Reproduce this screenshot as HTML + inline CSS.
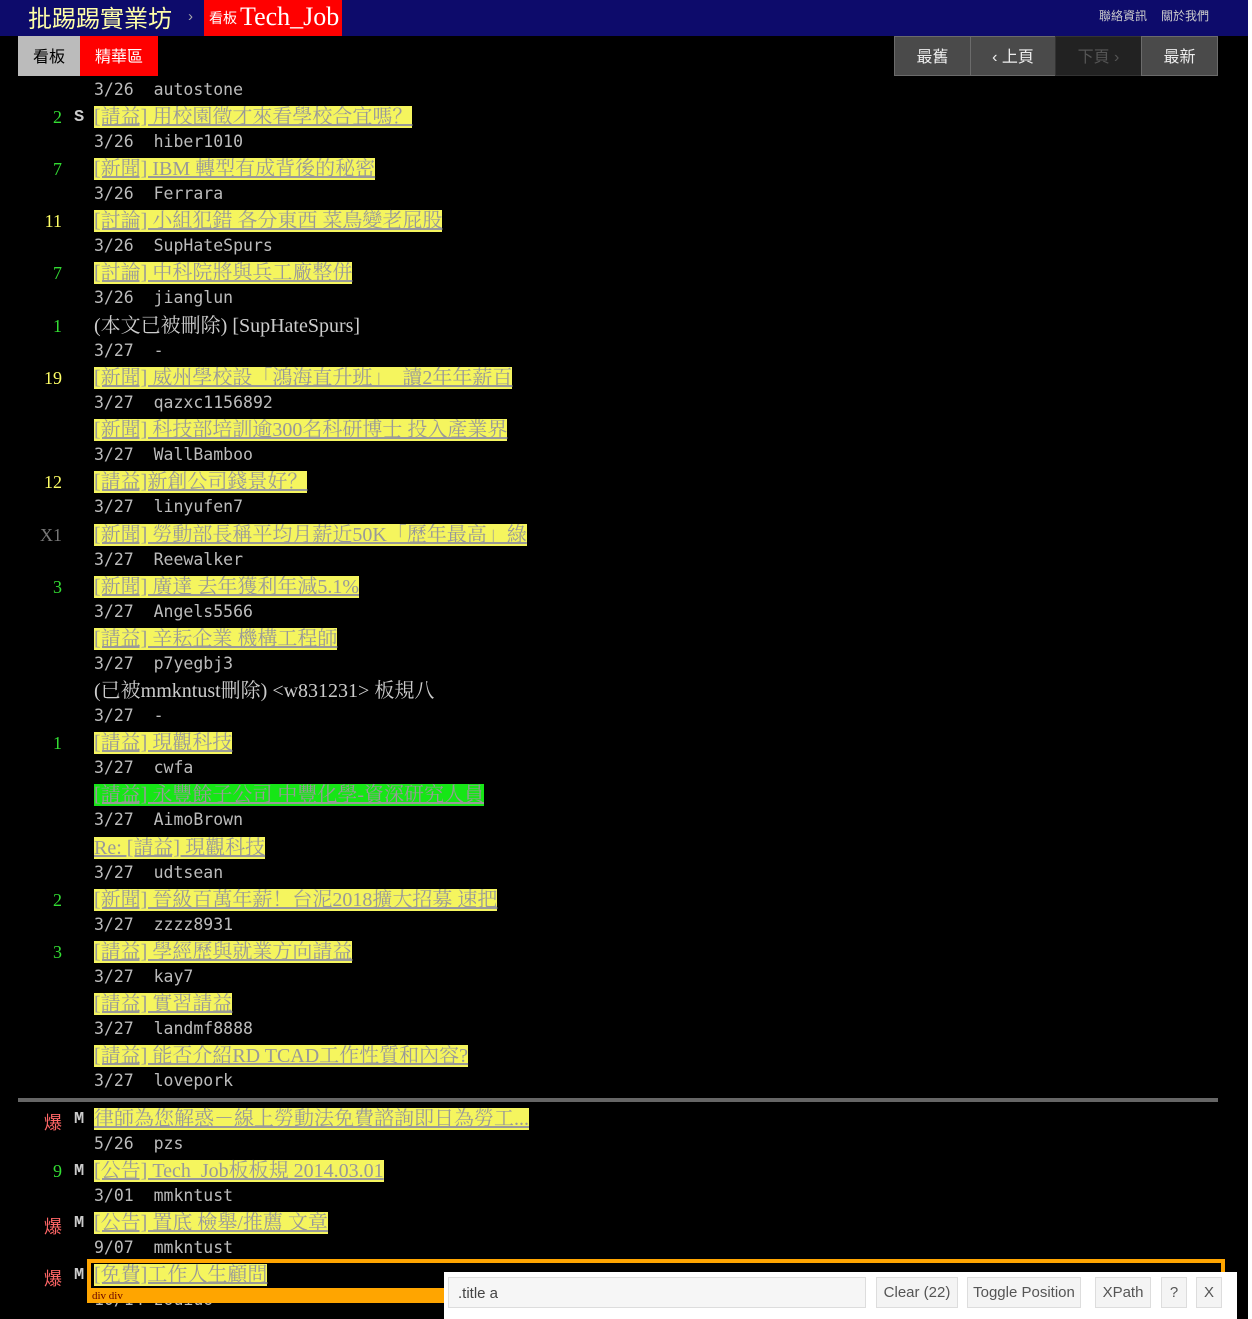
<!DOCTYPE html>
<html><head><meta charset="utf-8"><style>
body{margin:0;background:#000;width:1252px;height:1319px;overflow:hidden;position:relative;font-family:"Liberation Serif","Noto Serif CJK SC",serif;}
#top{position:absolute;left:0;top:0;width:1248px;height:36px;background:#0d0b6b;}
.logo{position:absolute;left:28px;top:-1px;font-size:24px;color:#ffffa8;font-family:"Liberation Sans","Noto Sans CJK TC",sans-serif;}
.gt{position:absolute;left:188px;top:8px;color:#aaa;font-size:15px;font-family:"Liberation Sans",sans-serif}
.board{position:absolute;left:204px;top:0;width:138px;height:36px;background:#f00;color:#fff;}
.board .s{position:absolute;left:5px;top:8px;font-size:14px;font-family:"Liberation Sans","Noto Sans CJK TC",sans-serif}
.board .b{position:absolute;left:36px;top:2px;font-size:26px}
.tr{position:absolute;top:7px;font-size:12px;color:#ccc;font-family:"Liberation Sans","Noto Sans CJK TC",sans-serif}
.btn{position:absolute;top:36px;height:40px;line-height:44px;text-align:center;font-size:16px;font-family:"Liberation Sans","Noto Sans CJK TC",sans-serif;box-sizing:border-box}
.rb{background:#4a4a4a;color:#eee;border:1px solid #6b6b6b;line-height:42px}
.row{position:absolute;left:0;width:1220px;height:52px}
.n{position:absolute;left:20px;width:42px;text-align:right;top:1px;font-size:18px;font-family:"Liberation Serif",serif}
.m{position:absolute;left:74px;top:2px;color:#ccc;font-family:"Liberation Mono",monospace;font-size:17px;font-weight:bold}
.t{position:absolute;left:94px;top:0;font-size:20px;line-height:22px;white-space:nowrap}
.t a{background:#f5f55e;color:#999;text-decoration:underline}
.t a.g{background:#16e616}
.t.d{color:#ccc}
.meta{position:absolute;left:94px;top:26px;color:#bbb;font-family:"DejaVu Sans Mono",monospace;font-size:16.5px;white-space:pre}
.gr{color:#33dd33}.ye{color:#ffff66}.gy{color:#777}.rd{color:#ff6666;font-family:"Noto Sans CJK TC",sans-serif;font-size:18px}
</style></head><body>
<div id="top">
<div class="logo">批踢踢實業坊</div><div class="gt">›</div>
<div class="board"><span class="s">看板</span><span class="b">Tech_Job</span></div>
<div class="tr" style="left:1099px">聯絡資訊</div><div class="tr" style="left:1161px">關於我們</div>
</div>
<div style="position:absolute;left:1248px;top:0;width:4px;height:1319px;background:#fff"></div>

<div class="row" style="top:54px"><div class="meta">3/26  autostone</div></div>
<div class="row" style="top:106px"><div class="n gr">2</div><div class="m">S</div><div class="t"><a>[請益] 用校園徵才來看學校合宜嗎？</a></div><div class="meta">3/26  hiber1010</div></div>
<div class="row" style="top:158px"><div class="n gr">7</div><div class="t"><a>[新聞] IBM 轉型有成背後的秘密</a></div><div class="meta">3/26  Ferrara</div></div>
<div class="row" style="top:210px"><div class="n ye">11</div><div class="t"><a>[討論] 小組犯錯 各分東西 菜鳥變老屁股</a></div><div class="meta">3/26  SupHateSpurs</div></div>
<div class="row" style="top:262px"><div class="n gr">7</div><div class="t"><a>[討論] 中科院將與兵工廠整併</a></div><div class="meta">3/26  jianglun</div></div>
<div class="row" style="top:315px"><div class="n gr">1</div><div class="t d">(本文已被刪除) [SupHateSpurs]</div><div class="meta">3/27  -</div></div>
<div class="row" style="top:367px"><div class="n ye">19</div><div class="t"><a>[新聞] 威州學校設「鴻海直升班」　讀2年年薪百</a></div><div class="meta">3/27  qazxc1156892</div></div>
<div class="row" style="top:419px"><div class="t"><a>[新聞] 科技部培訓逾300名科研博士 投入產業界</a></div><div class="meta">3/27  WallBamboo</div></div>
<div class="row" style="top:471px"><div class="n ye">12</div><div class="t"><a>[請益]新創公司錢景好？</a></div><div class="meta">3/27  linyufen7</div></div>
<div class="row" style="top:524px"><div class="n gy">X1</div><div class="t"><a>[新聞] 勞動部長稱平均月薪近50K「歷年最高」綠</a></div><div class="meta">3/27  Reewalker</div></div>
<div class="row" style="top:576px"><div class="n gr">3</div><div class="t"><a>[新聞] 廣達 去年獲利年減5.1%</a></div><div class="meta">3/27  Angels5566</div></div>
<div class="row" style="top:628px"><div class="t"><a>[請益] 辛耘企業 機構工程師</a></div><div class="meta">3/27  p7yegbj3</div></div>
<div class="row" style="top:680px"><div class="t d">(已被mmkntust刪除) &lt;w831231&gt; 板規八</div><div class="meta">3/27  -</div></div>
<div class="row" style="top:732px"><div class="n gr">1</div><div class="t"><a>[請益] 現觀科技</a></div><div class="meta">3/27  cwfa</div></div>
<div class="row" style="top:784px"><div class="t"><a class="g">[請益] 永豐餘子公司 中豐化學-資深研究人員</a></div><div class="meta">3/27  AimoBrown</div></div>
<div class="row" style="top:837px"><div class="t"><a>Re: [請益] 現觀科技</a></div><div class="meta">3/27  udtsean</div></div>
<div class="row" style="top:889px"><div class="n gr">2</div><div class="t"><a>[新聞] 晉級百萬年薪！台泥2018擴大招募 速把</a></div><div class="meta">3/27  zzzz8931</div></div>
<div class="row" style="top:941px"><div class="n gr">3</div><div class="t"><a>[請益] 學經歷與就業方向請益</a></div><div class="meta">3/27  kay7</div></div>
<div class="row" style="top:993px"><div class="t"><a>[請益] 實習請益</a></div><div class="meta">3/27  landmf8888</div></div>
<div class="row" style="top:1045px"><div class="t"><a>[請益] 能否介紹RD TCAD工作性質和內容?</a></div><div class="meta">3/27  lovepork</div></div>
<div style="position:absolute;left:18px;top:1098px;width:1200px;height:4px;background:#666"></div>
<div class="row" style="top:1108px"><div class="n rd">爆</div><div class="m">M</div><div class="t"><a>律師為您解惑－線上勞動法免費諮詢即日為勞工...</a></div><div class="meta">5/26  pzs</div></div>
<div class="row" style="top:1160px"><div class="n gr">9</div><div class="m">M</div><div class="t"><a>[公告] Tech_Job板板規 2014.03.01</a></div><div class="meta">3/01  mmkntust</div></div>
<div class="row" style="top:1212px"><div class="n rd">爆</div><div class="m">M</div><div class="t"><a>[公告] 置底 檢舉/推薦 文章</a></div><div class="meta">9/07  mmkntust</div></div>
<div class="row" style="top:1264px"><div class="n rd">爆</div><div class="m">M</div><div class="t"><a>[免費]工作人生顧問</a></div><div class="meta">10/14 zouiuo</div></div>

<div class="btn" style="left:18px;width:62px;background:#bbb;color:#000">看板</div>
<div class="btn" style="left:80px;width:78px;background:#f00;color:#fff">精華區</div>
<div class="btn rb" style="left:894px;width:77px">最舊</div>
<div class="btn rb" style="left:970px;width:86px">‹ 上頁</div>
<div class="btn rb" style="left:1055px;width:87px;background:#222;color:#555;border-color:#333">下頁 ›</div>
<div class="btn rb" style="left:1141px;width:77px">最新</div>

<div style="position:absolute;left:87px;top:1259px;width:1138px;height:44px;box-sizing:border-box;border:4px solid #ffa500;border-bottom:none"></div>
<div style="position:absolute;left:87px;top:1288px;width:357px;height:15px;background:#ffa500;color:#600;font-size:11px;line-height:17px;padding-left:5px;box-sizing:border-box">div div</div>
<div style="position:absolute;left:444px;top:1272px;width:793px;height:47px;background:#fff;font-family:'Liberation Sans',sans-serif;font-size:15px;color:#555">
<div style="position:absolute;left:4px;top:5px;width:418px;height:31px;border:1px solid #ddd;background:#f6f6f6;line-height:31px;padding-left:9px;box-sizing:border-box;color:#444">.title a</div>
<div style="position:absolute;left:432px;top:5px;width:82px;height:31px;border:1px solid #ddd;background:#f4f4f4;line-height:29px;text-align:center;box-sizing:border-box">Clear (22)</div>
<div style="position:absolute;left:523px;top:5px;width:114px;height:31px;border:1px solid #ddd;background:#f4f4f4;line-height:29px;text-align:center;box-sizing:border-box">Toggle Position</div>
<div style="position:absolute;left:651px;top:5px;width:56px;height:31px;border:1px solid #ddd;background:#f4f4f4;line-height:29px;text-align:center;box-sizing:border-box">XPath</div>
<div style="position:absolute;left:717px;top:5px;width:26px;height:31px;border:1px solid #ddd;background:#f4f4f4;line-height:29px;text-align:center;box-sizing:border-box">?</div>
<div style="position:absolute;left:752px;top:5px;width:26px;height:31px;border:1px solid #ddd;background:#f4f4f4;line-height:29px;text-align:center;box-sizing:border-box">X</div>
</div>
</body></html>
